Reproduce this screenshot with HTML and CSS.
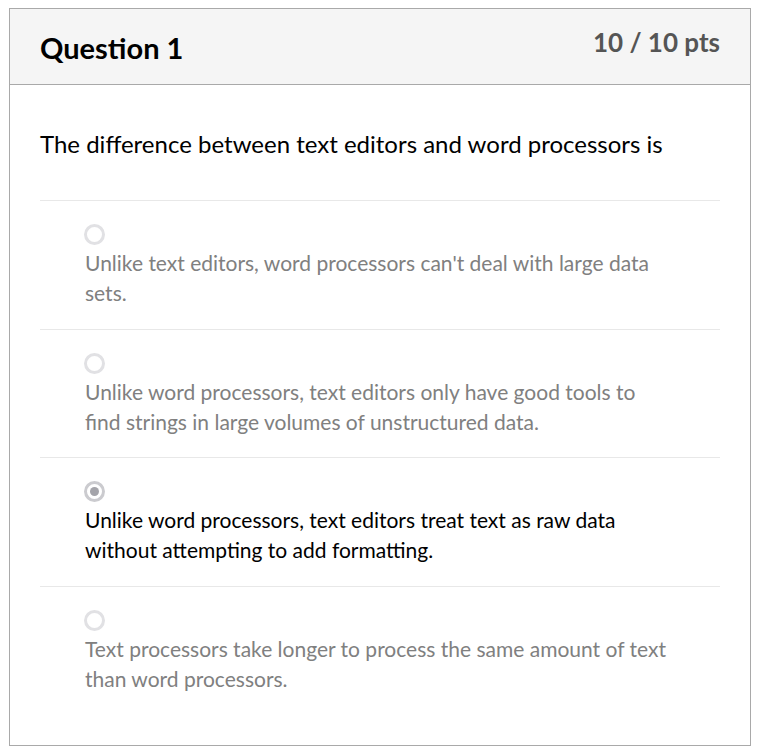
FILE: index.html
```html
<!DOCTYPE html>
<html>
<head>
<meta charset="utf-8">
<link rel="stylesheet" href="styles.css">
</head>
<body>
<div class="question">
  <div class="q-header">
    <h2 class="q-title">Question 1</h2>
    <div class="q-points">10 / 10 pts</div>
  </div>
  <div class="q-body">
    <p class="q-text">The difference between text editors and word processors is</p>
    <ul class="answers">
      <li class="answer">
        <span class="radio"></span>
        <div class="answer-text">Unlike text editors, word processors can't deal with large data sets.</div>
      </li>
      <li class="answer compact">
        <span class="radio"></span>
        <div class="answer-text">Unlike word processors, text editors only have good tools to find strings in large volumes of unstructured data.</div>
      </li>
      <li class="answer selected">
        <span class="radio checked"></span>
        <div class="answer-text">Unlike word processors, text editors treat text as raw data without attempting to add formatting.</div>
      </li>
      <li class="answer">
        <span class="radio"></span>
        <div class="answer-text">Text processors take longer to process the same amount of text than word processors.</div>
      </li>
    </ul>
  </div>
</div>
</body>
</html>
```

FILE: styles.css
```css
html, body {
  margin: 0;
  padding: 0;
  background: #fff;
}
body {
  font-family: Lato, "Liberation Sans", sans-serif;
  padding: 8px 0 0 9px;
}
.question {
  width: 742px;
  box-sizing: border-box;
  border: 1px solid #a9a9a9;
}
.q-header {
  display: flex;
  justify-content: space-between;
  align-items: flex-start;
  background: #f5f5f5;
  border-bottom: 1px solid #a9a9a9;
  height: 76px;
  box-sizing: border-box;
  padding: 0 30px;
}
.q-title {
  margin: 0;
  padding-top: 24px;
  font-size: 29px;
  font-weight: 700;
  color: #000;
  line-height: 30px;
}
.q-points {
  padding-top: 18px;
  font-size: 26px;
  font-weight: 700;
  color: #555;
  line-height: 30px;
}
.q-body {
  padding: 0 30px 30px;
}
.q-text {
  margin: 0;
  padding: 44px 0 41px;
  font-size: 24px;
  line-height: 30px;
  color: #000;
}
.answers {
  list-style: none;
  margin: 0;
  padding: 0;
}
.answer {
  border-top: 1px solid #e8e8e8;
  padding: 23px 0 21px 45px;
  display: flex;
  flex-direction: column;
  align-items: flex-start;
  gap: 3px;
}
.answer.compact {
  padding-bottom: 20px;
}
.answer-text {
  width: 588px;
  font-size: 21px;
  line-height: 30px;
  color: #808080;
}
.answer.selected .answer-text {
  color: #000;
}
.radio {
  width: 21px;
  height: 21px;
  margin-left: -1px;
  box-sizing: border-box;
  border: 3px solid #e1e1e4;
  border-radius: 50%;
  display: flex;
  align-items: center;
  justify-content: center;
  background: #fff;
}
.radio.checked {
  border-color: #cbcbcf;
}
.radio.checked::after {
  content: "";
  width: 9px;
  height: 9px;
  border-radius: 50%;
  background: #a4a4aa;
}
```
